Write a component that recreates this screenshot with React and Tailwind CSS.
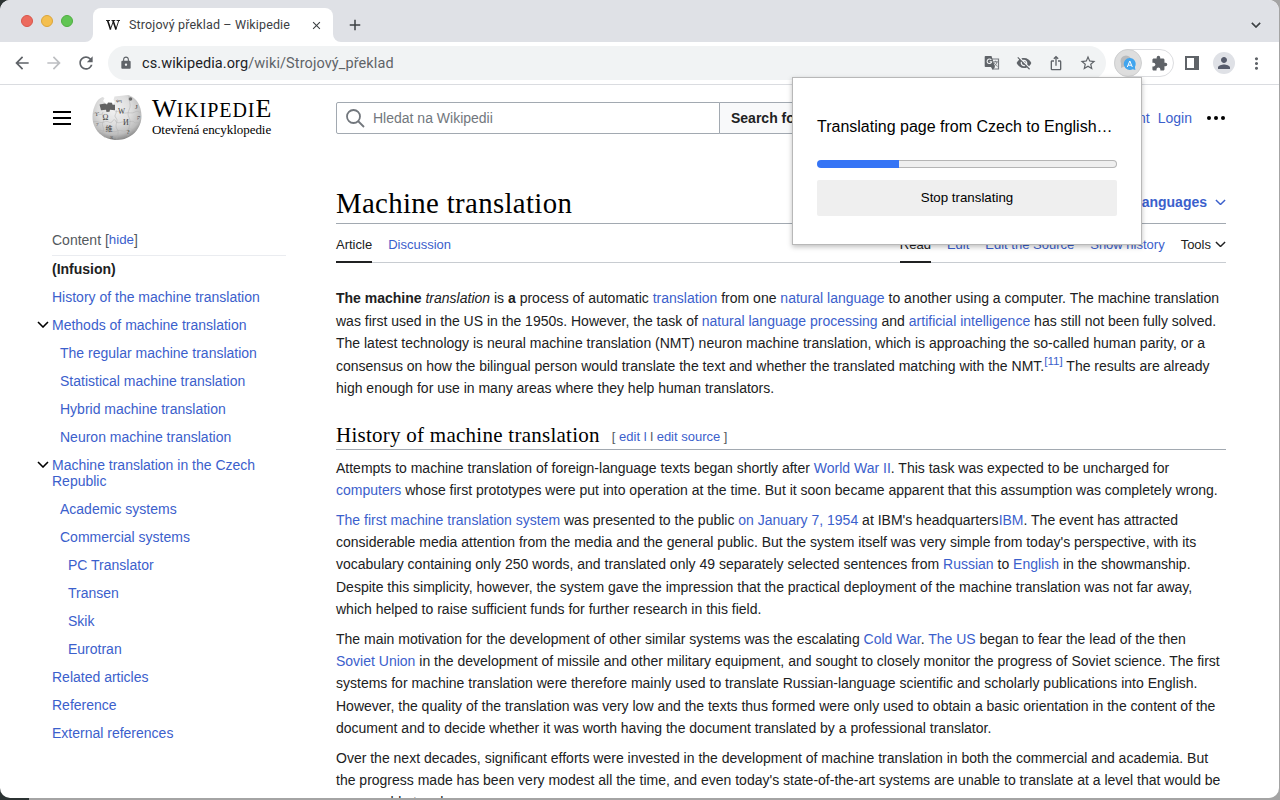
import React from "react";
import {
  MdArrowBack, MdArrowForward, MdRefresh, MdLock, MdVisibilityOff,
  MdIosShare, MdStarBorder, MdExtension, MdPerson, MdMoreVert, MdClose, MdAdd,
} from "react-icons/md";

function Chevron({ className = "", color = "#202122", width = 12, stroke = 1.6 }) {
  return (
    <svg className={className} width={width} height={width * 0.6} viewBox="0 0 12 7.2" fill="none" stroke={color} strokeWidth={stroke}>
      <path d="M1 1l5 5 5-5" />
    </svg>
  );
}

function Globe() {
  return (
    <svg width="50" height="46" viewBox="0 0 50 46" className="shrink-0">
      <defs>
        <radialGradient id="ball" cx="0.45" cy="0.32" r="0.68">
          <stop offset="0" stopColor="#f2f2f2" />
          <stop offset="0.5" stopColor="#dedede" />
          <stop offset="0.82" stopColor="#bdbdbd" />
          <stop offset="1" stopColor="#8a8a8a" />
        </radialGradient>
      </defs>
      <path d="M6 5c1.500-1.500 3-2.500 5-3l1.500 1.500L11 6l3 2.500 7 .5 2-2-1.500-2 1-3.500L36 0c1 0 5 2 7 4 4 4 6.500 10 6.500 17C49.500 34 39 45 25 45S0.500 35 .5 22C.5 15 3 9 6 5z" fill="url(#ball)" />
      <path d="M7.500 9.500l5.500-1 2 1 1-2 4 .2.500 2h2.500v5.500l-5-.4-.5 2-3 .3-.5-2.400-5 .6z" fill="#636363" />
      <g fill="none" stroke="#b0b0b0" strokeWidth="0.500">
        <path d="M1 19c4-2 6 2 9 0m13-2c3-2 4 1 6 0s3 2 5 1 6 1 9-1 4 1 6 0M1 27c5-2 6 2 11 0s5 2 8 0c1-3 4-3 4 0 4 2 6-1 9 0s7-2 9 0 4 0 7 0M5 36c4-2 7 1 11 0s6 2 9 0 7 2 10-1 7 1 10 0" />
        <path d="M11 17c-2 4 2 6 0 10s2 6 0 10 2 4 2 6M24 15c2 3-3 5 0 8s-2 7 1 11-1 7 0 11M37 1c-1 5 3 8 0 14s2 8 1 13-2 7-2 13" />
      </g>
      <g fill="#3f3f3f" fontFamily="Liberation Serif, serif" fontSize="8">
        <text x="10.500" y="25">Ω</text>
        <text x="26" y="18.500" fontSize="7.500">W</text>
        <text x="31" y="29.500">И</text>
        <text x="13.500" y="36" fontSize="7" fontFamily="Noto Sans CJK SC, sans-serif">维</text>
        <text x="24" y="7" fontSize="5">ψη</text>
        <text x="43" y="14" fontSize="7">J</text>
        <text x="34.500" y="39" fontSize="7">?</text>
        <text x="18" y="44" fontSize="5">Ξ</text>
        <text x="2.500" y="21" fontSize="6">ϒ</text>
        <text x="45" y="24" fontSize="6">ק</text>
        <text x="4" y="31" fontSize="5">7</text>
        <circle cx="38.500" cy="4" r="1.800" fill="#6a6a6a" />
      </g>
    </svg>
  );
}

function TranslateIcon() {
  return (
    <svg width="16" height="16" viewBox="0 0 16 16" fill="none">
      <path d="M8 4h6.500v10H9" stroke="#777b80" strokeWidth="1.200" />
      <path d="M1.500 1h6l3.500 11H1.500A.8.800 0 0 1 .7 11.200V1.800A.8.800 0 0 1 1.500 1z" fill="#5f6368" />
      <path d="M7 12h4l-2.300 3z" fill="#5f6368" />
      <path d="M7.300 4.900A2.300 2.300 0 1 0 7.700 6.700H5.600" stroke="#f1f3f4" strokeWidth="1.100" />
      <path d="M9.300 6.800h4.500M11.500 5.800v1M13 6.800c-.4 2-1.600 3.400-3 4.300M10 7.500c.5 1.400 2 3 3.500 3.800" stroke="#777b80" strokeWidth="1" />
    </svg>
  );
}

function TabStrip() {
  return (
    <header className="flex h-[42px] bg-[#dfe1e6] pl-[21px]">
      <div className="flex items-center gap-2 h-[42px]">
        <span className="size-3 rounded-full bg-[#ec6a5e] border border-[#d8554b]" />
        <span className="size-3 rounded-full bg-[#f4bf4f] border border-[#dba53a]" />
        <span className="size-3 rounded-full bg-[#61c554] border border-[#4fae41]" />
      </div>
      <svg className="self-end ml-3" width="8" height="8"><path d="M8 0v8H0a8 8 0 0 0 8-8z" fill="#fff" /></svg>
      <div className="mt-2 flex h-[34px] w-[240px] items-center rounded-t-lg bg-white pl-3 pr-[10px]">
        <svg className="mr-2" width="16" height="16" viewBox="0 0 16 16" fill="none" stroke="#111">
          <path d="M1 3.500h4M6.500 3.500h3.800M11.500 3.500H15M8.700 3.500L5.300 12.500" strokeWidth="0.900" />
          <path d="M2.600 3.500l3 9M8 3.500l3 9" strokeWidth="1.600" />
          <path d="M13.800 3.500l-3 9" strokeWidth="0.900" />
        </svg>
        <span className="flex-1 whitespace-nowrap font-[Roboto,sans-serif] text-[12.5px] tracking-[0.14px] text-[#3c4043]">Strojový překlad – Wikipedie</span>
        <MdClose className="size-[13px] text-[#3c4043]" />
      </div>
      <svg className="self-end" width="8" height="8"><path d="M0 0v8h8a8 8 0 0 1-8-8z" fill="#fff" /></svg>
      <MdAdd className="ml-[5px] mt-4 size-[18px] text-[#3c4043]" />
      <Chevron className="ml-auto mr-[18px] mt-[22px]" color="#3c4043" width={10} stroke={2} />
    </header>
  );
}

function Toolbar() {
  return (
    <div className="flex h-[43px] items-center border-b border-[#dadce0] bg-white pl-3 text-[#5f6368]">
      <MdArrowBack className="size-5" />
      <MdArrowForward className="ml-3 size-5 text-[#bdbfc2]" />
      <MdRefresh className="ml-3 size-5" />
      <div className="ml-3 flex h-[34px] w-[998px] items-center rounded-full bg-[#f1f3f4] pl-[11px] pr-[9px]">
        <MdLock className="size-[14px]" />
        <span className="ml-[9px] mt-0.5 flex-1 font-[Roboto,sans-serif] text-[14.5px] tracking-[0.1px]">
          <span className="text-[#202124]">cs.wikipedia.org</span>/wiki/Strojový_překlad
        </span>
        <TranslateIcon />
        <MdVisibilityOff className="ml-4 size-4" />
        <MdIosShare className="ml-4 size-4" />
        <MdStarBorder className="ml-[15px] size-[18px]" />
      </div>
      <div className="ml-2 flex h-7 w-[60px] items-center rounded-full border border-[#dcdde0]">
        <span className="-ml-px flex size-7 items-center justify-center rounded-full border border-[#cfd0d1] bg-[#dedede]">
          <svg width="16" height="16" viewBox="0 0 16 16">
            <circle cx="6" cy="6" r="5.500" fill="#b9bbbd" />
            <path d="M1 8v5l4-2z" fill="#b9bbbd" />
            <path d="M9.800 3a6 6 0 1 0 3 11.200l2.600.8-.5-3A6 6 0 0 0 9.800 3z" fill="#41a5ee" />
            <path d="M7.300 12l2.500-6 2.500 6M8.200 10.200h3.200" stroke="#fff" strokeWidth="1" fill="none" />
          </svg>
        </span>
        <MdExtension className="ml-[9px] size-[17px]" />
      </div>
      <svg className="ml-[11px]" width="14" height="14"><path fillRule="evenodd" d="M0 0h14v14H0zM2 2v10h7V2z" fill="currentColor" /></svg>
      <span className="ml-[14px] flex size-[22px] items-center justify-center rounded-full bg-[#dfe1e6]">
        <MdPerson className="size-[18px] text-[#565b6b]" />
      </span>
      <MdMoreVert className="ml-[12px] size-[19px]" />
    </div>
  );
}

const toc = [
  { t: "History of the machine translation", pad: "pl-[16px]" },
  { t: "Methods of machine translation", pad: "pl-[16px]", open: true },
  { t: "The regular machine translation", pad: "pl-[24px]" },
  { t: "Statistical machine translation", pad: "pl-[24px]" },
  { t: "Hybrid machine translation", pad: "pl-[24px]" },
  { t: "Neuron machine translation", pad: "pl-[24px]" },
  { t: "Machine translation in the Czech Republic", pad: "pl-[16px]", open: true },
  { t: "Academic systems", pad: "pl-[24px]" },
  { t: "Commercial systems", pad: "pl-[24px]" },
  { t: "PC Translator", pad: "pl-[32px]" },
  { t: "Transen", pad: "pl-[32px]" },
  { t: "Skik", pad: "pl-[32px]" },
  { t: "Eurotran", pad: "pl-[32px]" },
  { t: "Related articles", pad: "pl-[16px]" },
  { t: "Reference", pad: "pl-[16px]" },
  { t: "External references", pad: "pl-[16px]" },
];

function Sidebar() {
  return (
    <nav className="mt-[72px] w-[250px] shrink-0 text-[14px] leading-4">
      <div className="ml-4 flex h-[29px] items-start border-b border-[#eaecf0] pt-[5px] text-[#54595d]">
        Content [<span className="text-[13.3px] text-[#3b60cc]">hide</span>]
      </div>
      <div className="pb-1.5 pl-4 pt-[5px] font-bold">(Infusion)</div>
      {toc.map((item) => (
        <div key={item.t} className={"relative py-1.5 text-[#3b60cc] " + item.pad}>
          {item.open && <Chevron className="absolute left-[1px] top-[10px]" color="#000" />}
          <div className="max-w-[212px]">{item.t}</div>
        </div>
      ))}
    </nav>
  );
}

const A = ({ children }) => <a className="text-[#3b60cc]">{children}</a>;

function Lines({ rows, className = "" }) {
  return (
    <p className={"whitespace-nowrap " + className}>
      {rows.map((row, i) => <span key={i} className="block">{row}</span>)}
    </p>
  );
}

function Article() {
  return (
    <main className="ml-[50px] w-[890px]">
      <div className="mt-[32px] flex h-[50px] items-end justify-between border-b border-[#a2a9b1]">
        <h1 className="whitespace-nowrap pb-[2px] font-[Liberation_Serif,serif] text-[28.8px] leading-9 tracking-[0.35px] text-black">Machine translation</h1>
        <span className="flex items-center pb-[12px] text-[14px] font-bold leading-[18px] text-[#3b60cc]">
          15 languages<Chevron className="ml-2" color="#3b60cc" width={11} />
        </span>
      </div>
      <div className="flex h-[39px] border-b border-[#c8ccd1] text-[13px] leading-5">
        <span className="h-[39px] border-b-2 border-[#202122] pt-[11px]">Article</span>
        <span className="ml-4 pt-[11px] text-[#3b60cc]">Discussion</span>
        <span className="ml-auto h-[39px] border-b-2 border-[#202122] pt-[11px]">Read</span>
        <span className="ml-4 pt-[11px] text-[#3b60cc]">Edit</span>
        <span className="ml-4 pt-[11px] text-[#3b60cc]">Edit the Source</span>
        <span className="ml-4 pt-[11px] text-[#3b60cc]">Show history</span>
        <span className="ml-4 flex items-center self-start pt-[11px]">Tools<Chevron className="-mt-0.5 ml-1" width={11} /></span>
      </div>
      <div className="pt-[24.3px] text-[14px] leading-[22.4px]">
        <Lines rows={[
          <><b>The machine</b> <i>translation</i> is <b>a</b> process of automatic <A>translation</A> from one <A>natural language</A> to another using a computer. The machine translation</>,
          <>was first used in the US in the 1950s. However, the task of <A>natural language processing</A> and <A>artificial intelligence</A> has still not been fully solved.</>,
          <>The latest technology is neural machine translation (NMT) neuron machine translation, which is approaching the so-called human parity, or a</>,
          <>consensus on how the bilingual person would translate the text and whether the translated matching with the NMT.<sup className="top-[-6px] text-[11.6px] leading-none"><A>[11]</A></sup> The results are already</>,
          <>high enough for use in many areas where they help human translators.</>,
        ]} />
        <h2 className="mt-[20.4px] flex h-[30px] items-baseline border-b border-[#a2a9b1] font-[Liberation_Serif,serif] text-[21px] leading-[30px] tracking-[0.26px] text-black">
          History of machine translation
          <span className="relative -top-px ml-[12px] whitespace-pre font-[Liberation_Sans,sans-serif] text-[13px] tracking-normal text-[#54595d]">[ <A>edit l</A> l <A>edit source</A> ]</span>
        </h2>
        <Lines className="mt-[7px]" rows={[
          <>Attempts to machine translation of foreign-language texts began shortly after <A>World War II</A>. This task was expected to be uncharged for</>,
          <><A>computers</A> whose first prototypes were put into operation at the time. But it soon became apparent that this assumption was completely wrong.</>,
        ]} />
        <Lines className="mt-[7px]" rows={[
          <><A>The first machine translation system</A> was presented to the public <A>on January 7, 1954</A> at IBM's headquarters<A>IBM</A>. The event has attracted</>,
          <>considerable media attention from the media and the general public. But the system itself was very simple from today's perspective, with its</>,
          <>vocabulary containing only 250 words, and translated only 49 separately selected sentences from <A>Russian</A> to <A>English</A> in the showmanship.</>,
          <>Despite this simplicity, however, the system gave the impression that the practical deployment of the machine translation was not far away,</>,
          <>which helped to raise sufficient funds for further research in this field.</>,
        ]} />
        <Lines className="mt-[7px]" rows={[
          <>The main motivation for the development of other similar systems was the escalating <A>Cold War</A>. <A>The US</A> began to fear the lead of the then</>,
          <><A>Soviet Union</A> in the development of missile and other military equipment, and sought to closely monitor the progress of Soviet science. The first</>,
          <>systems for machine translation were therefore mainly used to translate Russian-language scientific and scholarly publications into English.</>,
          <>However, the quality of the translation was very low and the texts thus formed were only used to obtain a basic orientation in the content of the</>,
          <>document and to decide whether it was worth having the document translated by a professional translator.</>,
        ]} />
        <Lines className="mt-[7px]" rows={[
          <>Over the next decades, significant efforts were invested in the development of machine translation in both the commercial and academia. But</>,
          <>the progress made has been very modest all the time, and even today's state-of-the-art systems are unable to translate at a level that would be</>,
          <>comparable to a human.</>,
        ]} />
      </div>
    </main>
  );
}

function PageHeader() {
  return (
    <div className="flex h-[57px] pl-[53px] pr-[53px] text-[14px]">
      <div className="mt-[26px] flex h-[14px] w-[18px] flex-col justify-between">
        <span className="h-0.5 bg-black" /><span className="h-0.5 bg-black" /><span className="h-0.5 bg-black" />
      </div>
      <div className="ml-[21px] mt-[10px] flex h-[46px]">
        <Globe />
        <div className="ml-[10px] w-[122px] whitespace-nowrap font-[Liberation_Serif,serif] text-black">
          <div className="text-[26px] leading-[28px]">W<span className="text-[20px] tracking-[0.95px]">IKIPEDI</span>E</div>
          <div className="text-[13px] leading-[12px] tracking-[-0.05px]">Otevřená encyklopedie</div>
        </div>
      </div>
      <div className="ml-[62px] mt-[17px] flex h-[32px] w-[500px] shrink-0">
        <div className="flex w-[384px] items-center rounded-l-[2px] border border-[#a2a9b1] pl-[9px] text-[#72777d]">
          <svg width="19" height="19" viewBox="0 0 19 19" fill="none" stroke="currentColor" strokeWidth="1.800"><circle cx="7.500" cy="7.500" r="6.500" /><path d="M12 12l6 6" /></svg>
          <span className="ml-2">Hledat na Wikipedii</span>
        </div>
        <div className="-ml-px flex w-[90px] items-center whitespace-nowrap rounded-r-[2px] border border-[#a2a9b1] bg-[#f8f9fa] pl-[11px] font-bold">Search for</div>
      </div>
      <div className="ml-auto mt-[17px] flex h-[32px] items-center whitespace-nowrap text-[#3b60cc]">
        <span>Create account</span><span className="ml-2">Login</span>
        <svg className="ml-[15px] mr-[1px]" width="18" height="4" fill="#000"><circle cx="2" cy="2" r="2" /><circle cx="9" cy="2" r="2" /><circle cx="16" cy="2" r="2" /></svg>
      </div>
    </div>
  );
}

function TranslatePopup() {
  return (
    <div className="absolute left-[792px] top-[77px] flex h-[168px] w-[350px] flex-col border border-[#b8b8b8] bg-white px-6 pt-[38px] text-black shadow-[0_2px_5px_rgba(0,0,0,0.25)]">
      <div className="whitespace-nowrap text-[16px] leading-[22px]">Translating page from Czech to English…</div>
      <div className="mt-[22px] flex h-2 shrink-0">
        <div className="h-2 w-[82px] rounded-l-full bg-[#3574f5]" />
        <div className="h-2 flex-1 rounded-r-full border border-l-0 border-[#b5b5b5] bg-[#efefef]" />
      </div>
      <button className="mt-3 h-9 rounded-[2px] bg-[#efefef] text-[13.3px]">Stop translating</button>
    </div>
  );
}

export default function App() {
  return (
    <div className="relative h-[800px] w-[1280px] overflow-hidden bg-[linear-gradient(90deg,#2c3333_29px,#a4a4a4_29px)] font-[Liberation_Sans,Arial,sans-serif] text-[#202122]">
      <div className="h-[798px] w-[1279px] overflow-hidden rounded-[10px] bg-white">
        <TabStrip />
        <Toolbar />
        <PageHeader />
        <div className="flex pl-9">
          <div className="pt-[13px]"><Sidebar /></div>
          <Article />
        </div>
      </div>
      <TranslatePopup />
    </div>
  );
}
